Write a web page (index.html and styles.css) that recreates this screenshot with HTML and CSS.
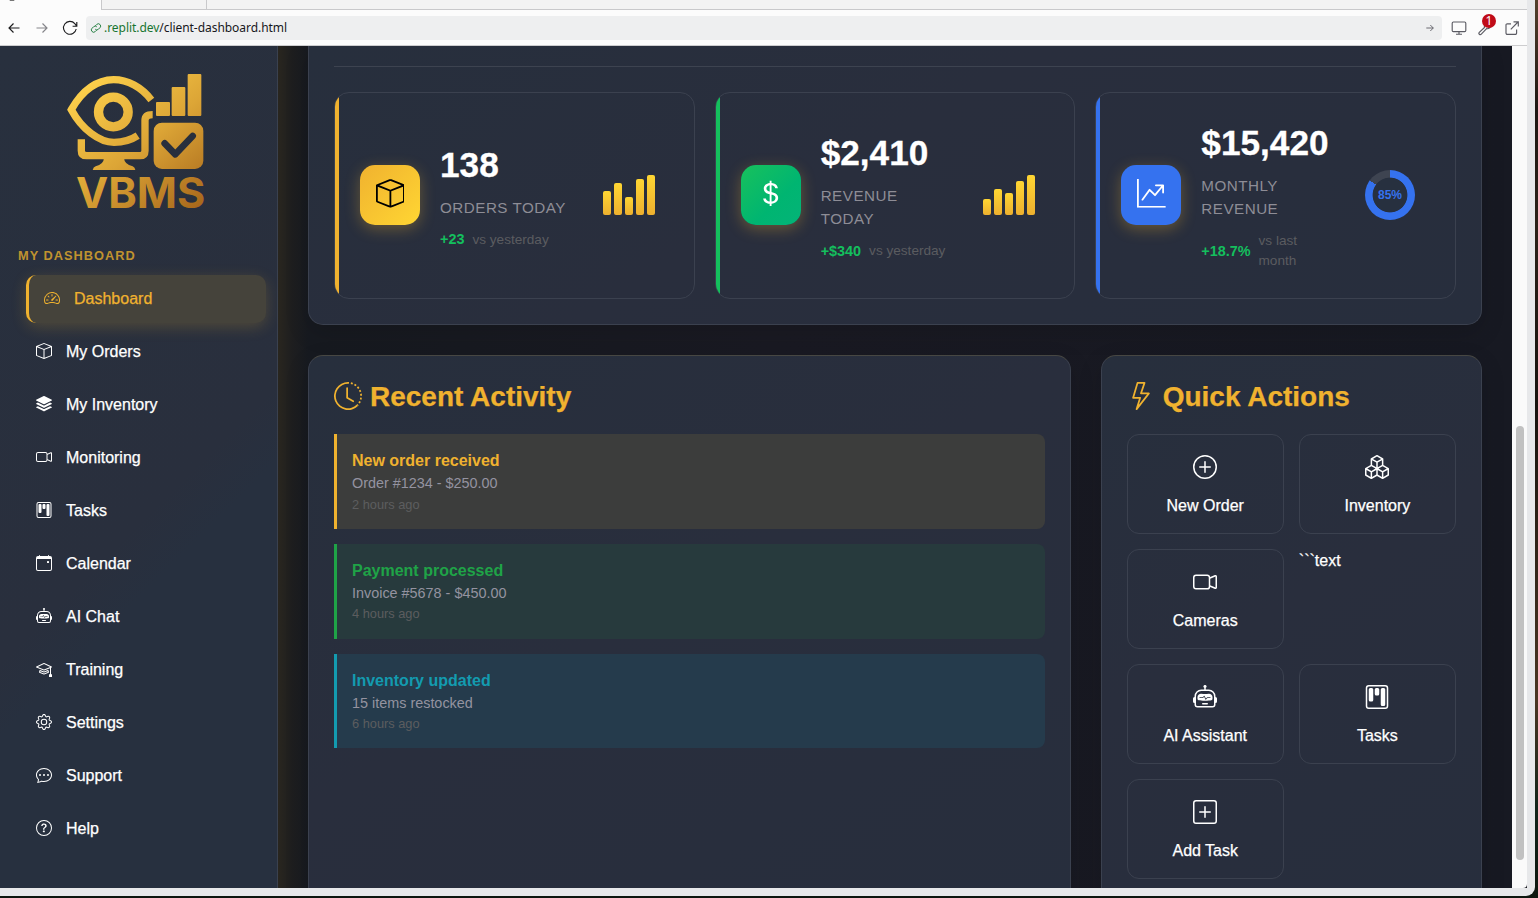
FILE: index.html
```html
<!DOCTYPE html>
<html lang="en">
<head>
<meta charset="utf-8">
<title>Client Dashboard</title>
<link rel="stylesheet" href="styles.css">
</head>
<body>
<svg class="sprite" aria-hidden="true">
  <symbol id="speedometer" viewBox="0 0 16 16"><path d="M8 4a.5.5 0 0 1 .5.5V6a.5.5 0 0 1-1 0V4.5A.5.5 0 0 1 8 4M3.732 5.732a.5.5 0 0 1 .707 0l.915.914a.5.5 0 1 1-.708.708l-.914-.915a.5.5 0 0 1 0-.707M2 10a.5.5 0 0 1 .5-.5h1.586a.5.5 0 0 1 0 1H2.5A.5.5 0 0 1 2 10m9.5 0a.5.5 0 0 1 .5-.5h1.5a.5.5 0 0 1 0 1H12a.5.5 0 0 1-.5-.5m.754-4.246a.39.39 0 0 0-.527-.02L7.547 9.31a.91.91 0 1 0 1.302 1.258l3.434-4.297a.39.39 0 0 0-.029-.518z"/><path fill-rule="evenodd" d="M0 10a8 8 0 1 1 15.547 2.661c-.442 1.253-1.845 1.602-2.932 1.25C11.309 13.488 9.475 13 8 13c-1.474 0-3.31.488-4.615.911-1.087.352-2.49.003-2.932-1.25A8 8 0 0 1 0 10m8-7a7 7 0 0 0-6.603 9.329c.203.575.923.876 1.68.63C4.397 12.533 6.358 12 8 12s3.604.532 4.923.96c.757.245 1.477-.056 1.68-.631A7 7 0 0 0 8 3"/></symbol>
  <symbol id="box" viewBox="0 0 16 16"><path d="M8.186 1.113a.5.5 0 0 0-.372 0L1.846 3.5 8 5.961 14.154 3.5zM15 4.239l-6.5 2.6v7.922l6.5-2.6V4.24zM7.5 14.762V6.838L1 4.239v7.923zM7.443.184a1.5 1.5 0 0 1 1.114 0l7.129 2.852A.5.5 0 0 1 16 3.5v8.662a1 1 0 0 1-.629.928l-7.185 2.874a.5.5 0 0 1-.372 0L.63 13.09a1 1 0 0 1-.63-.928V3.5a.5.5 0 0 1 .314-.464z"/></symbol>
  <symbol id="stack" viewBox="0 0 16 16"><path d="m14.12 10.163 1.715.858c.22.11.22.424 0 .534L8.267 15.34a.6.6 0 0 1-.534 0L.165 11.555a.299.299 0 0 1 0-.534l1.716-.858 5.317 2.659c.505.252 1.1.252 1.604 0l5.317-2.66zM7.733.063a.6.6 0 0 1 .534 0l7.568 3.784a.3.3 0 0 1 0 .535L8.267 8.165a.6.6 0 0 1-.534 0L.165 4.382a.299.299 0 0 1 0-.535z"/><path d="m14.12 6.576 1.715.858c.22.11.22.424 0 .534l-7.568 3.784a.6.6 0 0 1-.534 0L.165 7.968a.299.299 0 0 1 0-.534l1.716-.858 5.317 2.659c.505.252 1.1.252 1.604 0z"/></symbol>
  <symbol id="video" viewBox="0 0 16 16"><path fill-rule="evenodd" d="M0 5a2 2 0 0 1 2-2h7.5a2 2 0 0 1 1.983 1.738l3.11-1.382A1 1 0 0 1 16 4.269v7.462a1 1 0 0 1-1.406.913l-3.111-1.382A2 2 0 0 1 9.5 13H2a2 2 0 0 1-2-2zm11.5 5.175 3.5 1.556V4.269l-3.5 1.556zM2 4a1 1 0 0 0-1 1v6a1 1 0 0 0 1 1h7.5a1 1 0 0 0 1-1V5a1 1 0 0 0-1-1z"/></symbol>
  <symbol id="kanban" viewBox="0 0 16 16"><path d="M13.5 1a1 1 0 0 1 1 1v12a1 1 0 0 1-1 1h-11a1 1 0 0 1-1-1V2a1 1 0 0 1 1-1zm-11-1a2 2 0 0 0-2 2v12a2 2 0 0 0 2 2h11a2 2 0 0 0 2-2V2a2 2 0 0 0-2-2z"/><path d="M6.5 3a1 1 0 0 1 1-1h1a1 1 0 0 1 1 1v3a1 1 0 0 1-1 1h-1a1 1 0 0 1-1-1zm-4 0a1 1 0 0 1 1-1h1a1 1 0 0 1 1 1v7a1 1 0 0 1-1 1h-1a1 1 0 0 1-1-1zm8 0a1 1 0 0 1 1-1h1a1 1 0 0 1 1 1v10a1 1 0 0 1-1 1h-1a1 1 0 0 1-1-1z"/></symbol>
  <symbol id="calendar" viewBox="0 0 16 16"><path d="M11 6.5a.5.5 0 0 1 .5-.5h1a.5.5 0 0 1 .5.5v1a.5.5 0 0 1-.5.5h-1a.5.5 0 0 1-.5-.5z"/><path d="M3.5 0a.5.5 0 0 1 .5.5V1h8V.5a.5.5 0 0 1 1 0V1h1a2 2 0 0 1 2 2v11a2 2 0 0 1-2 2H2a2 2 0 0 1-2-2V3a2 2 0 0 1 2-2h1V.5a.5.5 0 0 1 .5-.5M1 4v10a1 1 0 0 0 1 1h12a1 1 0 0 0 1-1V4z"/></symbol>
  <symbol id="robot" viewBox="0 0 16 16"><path d="M6 12.5a.5.5 0 0 1 .5-.5h3a.5.5 0 0 1 0 1h-3a.5.5 0 0 1-.5-.5M3 8.062C3 6.76 4.235 5.765 5.53 5.886a26.6 26.6 0 0 0 4.94 0C11.765 5.765 13 6.76 13 8.062v1.157a.93.93 0 0 1-.765.935c-.845.147-2.34.346-4.235.346s-3.39-.2-4.235-.346A.93.93 0 0 1 3 9.219zm4.542-.827a.25.25 0 0 0-.217.068l-.92.9a25 25 0 0 1-1.871-.183.25.25 0 0 0-.068.495c.55.076 1.232.149 2.02.193a.25.25 0 0 0 .189-.071l.754-.736.847 1.71a.25.25 0 0 0 .404.062l.932-.97a25 25 0 0 0 1.922-.188.25.25 0 0 0-.068-.495c-.538.074-1.207.145-1.98.189a.25.25 0 0 0-.166.076l-.754.785-.842-1.7a.25.25 0 0 0-.182-.135"/><path d="M8.5 1.866a1 1 0 1 0-1 0V3h-2A4.5 4.5 0 0 0 1 7.5V8a1 1 0 0 0-1 1v2a1 1 0 0 0 1 1v1a2 2 0 0 0 2 2h10a2 2 0 0 0 2-2v-1a1 1 0 0 0 1-1V9a1 1 0 0 0-1-1v-.5A4.5 4.5 0 0 0 10.5 3h-2zM14 7.5V13a1 1 0 0 1-1 1H3a1 1 0 0 1-1-1V7.5A3.5 3.5 0 0 1 5.5 4h5A3.5 3.5 0 0 1 14 7.5"/></symbol>
  <symbol id="mortarboard" viewBox="0 0 16 16"><path d="M8.211 2.047a.5.5 0 0 0-.422 0l-7.5 3.5a.5.5 0 0 0 .025.917l7.5 3a.5.5 0 0 0 .372 0L14 7.14V13a1 1 0 0 0-1 1v2h3v-2a1 1 0 0 0-1-1V6.739l.686-.275a.5.5 0 0 0 .025-.917zM8 8.46 1.758 5.965 8 3.052l6.242 2.913z"/><path d="M4.176 9.032a.5.5 0 0 0-.656.327l-.5 1.7a.5.5 0 0 0 .294.605l4.5 1.8a.5.5 0 0 0 .372 0l4.5-1.8a.5.5 0 0 0 .294-.605l-.5-1.7a.5.5 0 0 0-.656-.327L8 10.466zm-.068 1.873.22-.748 3.496 1.311a.5.5 0 0 0 .352 0l3.496-1.311.22.748L8 12.46z"/></symbol>
  <symbol id="gear" viewBox="0 0 16 16"><path d="M8 4.754a3.246 3.246 0 1 0 0 6.492 3.246 3.246 0 0 0 0-6.492M5.754 8a2.246 2.246 0 1 1 4.492 0 2.246 2.246 0 0 1-4.492 0"/><path d="M9.796 1.343c-.527-1.79-3.065-1.79-3.592 0l-.094.319a.873.873 0 0 1-1.255.52l-.292-.16c-1.64-.892-3.433.902-2.54 2.541l.159.292a.873.873 0 0 1-.52 1.255l-.319.094c-1.79.527-1.79 3.065 0 3.592l.319.094a.873.873 0 0 1 .52 1.255l-.16.292c-.892 1.64.901 3.434 2.541 2.54l.292-.159a.873.873 0 0 1 1.255.52l.094.319c.527 1.79 3.065 1.79 3.592 0l.094-.319a.873.873 0 0 1 1.255-.52l.292.16c1.64.893 3.434-.902 2.54-2.541l-.159-.292a.873.873 0 0 1 .52-1.255l.319-.094c1.79-.527 1.79-3.065 0-3.592l-.319-.094a.873.873 0 0 1-.52-1.255l.16-.292c.893-1.64-.902-3.433-2.541-2.54l-.292.159a.873.873 0 0 1-1.255-.52zm-2.633.283c.246-.835 1.428-.835 1.674 0l.094.319a1.873 1.873 0 0 0 2.693 1.115l.291-.16c.764-.415 1.6.42 1.184 1.185l-.159.292a1.873 1.873 0 0 0 1.116 2.692l.318.094c.835.246.835 1.428 0 1.674l-.319.094a1.873 1.873 0 0 0-1.115 2.693l.16.291c.415.764-.42 1.6-1.185 1.184l-.291-.159a1.873 1.873 0 0 0-2.693 1.116l-.094.318c-.246.835-1.428.835-1.674 0l-.094-.319a1.873 1.873 0 0 0-2.692-1.115l-.292.16c-.764.415-1.6-.42-1.184-1.185l.159-.291A1.873 1.873 0 0 0 1.945 8.93l-.319-.094c-.835-.246-.835-1.428 0-1.674l.319-.094A1.873 1.873 0 0 0 3.06 4.377l-.16-.292c-.415-.764.42-1.6 1.185-1.184l.292.159a1.873 1.873 0 0 0 2.692-1.115z"/></symbol>
  <symbol id="chat" viewBox="0 0 16 16"><path d="M5 8a1 1 0 1 1-2 0 1 1 0 0 1 2 0m4 0a1 1 0 1 1-2 0 1 1 0 0 1 2 0m3 1a1 1 0 1 0 0-2 1 1 0 0 0 0 2"/><path d="m2.165 15.803.02-.004c1.83-.363 2.948-.842 3.468-1.105A9 9 0 0 0 8 15c4.418 0 8-3.134 8-7s-3.582-7-8-7-8 3.134-8 7c0 1.76.743 3.37 1.97 4.6a10.4 10.4 0 0 1-.524 2.318l-.003.011a11 11 0 0 1-.244.637c-.079.186.074.394.273.362a22 22 0 0 0 .693-.125m.8-3.108a1 1 0 0 0-.287-.801C1.618 10.83 1 9.468 1 8c0-3.192 3.004-6 7-6s7 2.808 7 6-3.004 6-7 6a8 8 0 0 1-2.088-.272 1 1 0 0 0-.711.074c-.387.196-1.24.57-2.634.893a11 11 0 0 0 .398-2"/></symbol>
  <symbol id="question" viewBox="0 0 16 16"><path d="M8 15A7 7 0 1 1 8 1a7 7 0 0 1 0 14m0 1A8 8 0 1 0 8 0a8 8 0 0 0 0 16"/><path d="M5.255 5.786a.237.237 0 0 0 .241.247h.825c.138 0 .248-.113.266-.25.09-.656.54-1.134 1.342-1.134.686 0 1.314.343 1.314 1.168 0 .635-.374.927-.965 1.371-.673.489-1.206 1.06-1.168 1.987l.003.217a.25.25 0 0 0 .25.246h.811a.25.25 0 0 0 .25-.25v-.105c0-.718.273-.927 1.01-1.486.609-.463 1.244-.977 1.244-2.056 0-1.511-1.276-2.241-2.673-2.241-1.267 0-2.655.59-2.75 2.286m1.557 5.763c0 .533.425.927 1.01.927.609 0 1.028-.394 1.028-.927 0-.552-.42-.94-1.029-.94-.584 0-1.009.388-1.009.94"/></symbol>
  <symbol id="dollar" viewBox="0 0 16 16"><path d="M4 10.781c.148 1.667 1.513 2.85 3.591 3.003V15h1.043v-1.216c2.27-.179 3.678-1.438 3.678-3.3 0-1.59-.947-2.51-2.956-3.028l-.722-.187V3.467c1.122.11 1.879.714 2.07 1.616h1.47c-.166-1.6-1.54-2.748-3.54-2.875V1H7.591v1.233c-1.939.23-3.27 1.472-3.27 3.156 0 1.454.966 2.483 2.661 2.917l.61.162v4.031c-1.149-.17-1.94-.8-2.131-1.718zm3.391-3.836c-1.043-.263-1.6-.825-1.6-1.616 0-.944.704-1.641 1.8-1.828v3.495l-.2-.05zm1.591 1.872c1.287.323 1.852.859 1.852 1.769 0 1.097-.826 1.828-2.2 1.939V8.73z"/></symbol>
  <symbol id="graph" viewBox="0 0 16 16"><path fill-rule="evenodd" d="M0 0h1v15h15v1H0zm10 3.5a.5.5 0 0 1 .5-.5h4a.5.5 0 0 1 .5.5v4a.5.5 0 0 1-1 0V4.9l-3.613 4.417a.5.5 0 0 1-.74.037L7.06 6.767l-3.656 5.027a.5.5 0 0 1-.808-.588l4-5.5a.5.5 0 0 1 .758-.06l2.609 2.61L13.445 4H10.5a.5.5 0 0 1-.5-.5"/></symbol>
  <symbol id="clock" viewBox="0 0 16 16"><path d="M8.515 1.019A7 7 0 0 0 8 1V0a8 8 0 0 1 .589.022zm2.004.45a7 7 0 0 0-.985-.299l.219-.976q.576.129 1.126.342zm1.37.71a7 7 0 0 0-.439-.27l.493-.87a8 8 0 0 1 .979.654l-.615.789a7 7 0 0 0-.418-.302zm1.834 1.79a7 7 0 0 0-.653-.796l.724-.69q.406.429.747.91zm.744 1.352a7 7 0 0 0-.214-.468l.893-.45a8 8 0 0 1 .45 1.088l-.95.313a7 7 0 0 0-.179-.483m.53 2.507a7 7 0 0 0-.1-1.025l.985-.17q.1.58.116 1.17zm-.131 1.538q.05-.254.081-.51l.993.123a8 8 0 0 1-.23 1.155l-.964-.267q.069-.247.12-.501m-.952 2.379q.276-.436.486-.908l.914.405q-.24.54-.555 1.038zm-.964 1.205q.183-.183.35-.378l.758.653a8 8 0 0 1-.401.432z"/><path d="M8 1a7 7 0 1 0 4.95 11.95l.707.707A8.001 8.001 0 1 1 8 0z"/><path d="M7.5 3a.5.5 0 0 1 .5.5v5.21l3.248 1.856a.5.5 0 0 1-.496.868l-3.5-2A.5.5 0 0 1 7 9V3.5a.5.5 0 0 1 .5-.5"/></symbol>
  <symbol id="lightning" viewBox="0 0 16 16"><path d="M5.52.359A.5.5 0 0 1 6 0h4a.5.5 0 0 1 .474.658L8.694 6H12.5a.5.5 0 0 1 .395.807l-7 9a.5.5 0 0 1-.873-.454L6.823 9.5H3.5a.5.5 0 0 1-.48-.641zM6.374 1 4.168 8.5H7.5a.5.5 0 0 1 .478.647L6.78 13.04 11.478 7H8a.5.5 0 0 1-.474-.658L9.306 1z"/></symbol>
  <symbol id="boxes" viewBox="0 0 16 16"><path d="M7.752.066a.5.5 0 0 1 .496 0l3.75 2.143a.5.5 0 0 1 .252.434v3.995l3.498 2A.5.5 0 0 1 16 9.07v4.286a.5.5 0 0 1-.252.434l-3.75 2.143a.5.5 0 0 1-.496 0l-3.502-2-3.502 2.001a.5.5 0 0 1-.496 0l-3.75-2.143A.5.5 0 0 1 0 13.357V9.071a.5.5 0 0 1 .252-.434L3.75 6.638V2.643a.5.5 0 0 1 .252-.434zM4.25 7.504 1.508 9.071l2.742 1.567 2.742-1.567zM7.5 9.933l-2.75 1.571v3.134l2.75-1.571zm1 3.134 2.75 1.571v-3.134L8.5 9.933zm.508-3.996 2.742 1.567 2.742-1.567-2.742-1.567zm2.242-2.433V3.504L8.5 5.076V8.21zM7.5 8.21V5.076L4.75 3.504v3.134zM5.258 2.643 8 4.21l2.742-1.567L8 1.076zM15 9.933l-2.75 1.571v3.134L15 13.067zM3.75 14.638v-3.134L1 9.933v3.134z"/></symbol>
  <symbol id="plus-circle" viewBox="0 0 16 16"><g fill="none" stroke="currentColor"><circle cx="8" cy="8" r="7.5"/><path stroke-linecap="round" d="M8 4.5v7M4.500 8h7"/></g></symbol>
  <symbol id="plus-square" viewBox="0 0 16 16"><g fill="none" stroke="currentColor"><rect x=".5" y=".5" width="15" height="15" rx="1.500"/><path stroke-linecap="round" d="M8 4.500v7M4.500 8h7"/></g></symbol>
</svg>

<div class="window">
  <header class="chrome">
    <div class="tabs"><span class="tab active"></span><span class="tab second"></span></div>
    <div class="toolbar">
      <svg class="nav-icon" viewBox="0 0 16 16"><path d="M13.500 8H3.300M7.500 3.500 3 8l4.500 4.500"/></svg>
      <svg class="nav-icon faded" viewBox="0 0 16 16"><path d="M2.500 8h10.200M8.500 3.500 13 8l-4.500 4.500"/></svg>
      <svg class="nav-icon" viewBox="0 0 16 16"><path d="M14.200 9A6.400 6.400 0 1 1 12.800 3.700L14.600 6M14.800 2v4.200h-4.200"/></svg>
      <div class="url">
        <svg class="link-icon" viewBox="0 0 12 12"><g transform="rotate(-45 6 6)"><path d="M5 8H3a2.300 2.300 0 0 1 0-4.600h2.200a2.300 2.300 0 0 1 2.200 2.300M7 4h2a2.300 2.300 0 0 1 0 4.600H6.800a2.300 2.300 0 0 1-2.200-2.300"/></g></svg>
        <span class="address"><span class="host">.replit.dev</span>/client-dashboard.html</span>
        <svg class="go-icon" viewBox="0 0 8 8"><path d="M.3 4h7M4.300 1l3 3-3 3"/></svg>
      </div>
      <svg class="tool-icon monitor" viewBox="0 0 16 16"><rect x="1.200" y="2" width="13.600" height="9.600" rx="1.200"/><path d="M8 11.600V14M5 14.200h6"/></svg>
      <span class="tool-wrap">
        <svg class="tool-icon" viewBox="0 0 16 16"><path d="M8 7 2.300 12.300a1.300 1.300 0 0 0 2 1.900L9.600 8.600M7.600 7.200a3.400 3.400 0 0 1 4.200-4.400M9.500 8.600a3.400 3.400 0 0 0 4.200-4"/></svg>
        <span class="count">1</span>
      </span>
      <svg class="tool-icon" viewBox="0 0 16 16"><path d="M7 3.800H3.300a1.300 1.300 0 0 0-1.300 1.300v8A1.300 1.300 0 0 0 3.300 14.400h8a1.300 1.300 0 0 0 1.300-1.300V9.500M9.500 1.800h4.800v4.800M14 2 6.800 9.300"/></svg>
    </div>
  </header>

  <div class="viewport">
    <aside class="sidebar">
      <svg class="logo" viewBox="0 0 510 480">
        <defs>
          <linearGradient id="gold" gradientUnits="userSpaceOnUse" x1="120" y1="60" x2="430" y2="450"><stop offset="0" stop-color="#fdd04b"/><stop offset=".5" stop-color="#dca536"/><stop offset="1" stop-color="#a9691c"/></linearGradient>
        </defs>
        <g fill="none" stroke="url(#gold)">
          <circle cx="190" cy="156" r="44.500" stroke-width="28"/>
          <path stroke-width="22" d="M304 120C275 82 233 59 191 59 130 60 89 105 64 149 96 208 148 247 192 247 220 247 245 239 263 227"/>
          <path stroke-width="22" d="M94 238V272Q94 287 110 287H270Q285 287 285 272V181Q285 164 308 164"/>
        </g>
        <g fill="url(#gold)">
          <path d="M162 294H222Q223 313 248 319Q255 322 256 330H128Q130 321 137 319Q161 313 162 294Z"/>
          <rect x="318" y="126" width="42" height="42" rx="3"/>
          <rect x="365" y="81" width="41" height="87" rx="3"/>
          <rect x="413" y="42" width="41" height="126" rx="3"/>
          <rect x="311" y="188" width="149" height="139" rx="25"/>
          <text class="logo-name" x="78" y="443" textLength="388" lengthAdjust="spacingAndGlyphs">VBMS</text>
        </g>
        <path fill="none" stroke="#282f3d" stroke-width="20" stroke-linecap="round" stroke-linejoin="round" d="M344 250 376 283 428 228"/>
      </svg>
      <div class="section-label">MY DASHBOARD</div>
      <nav class="menu">
        <a class="menu-item active"><svg class="icon"><use href="#speedometer"/></svg>Dashboard</a>
        <a class="menu-item"><svg class="icon"><use href="#box"/></svg>My Orders</a>
        <a class="menu-item"><svg class="icon"><use href="#stack"/></svg>My Inventory</a>
        <a class="menu-item"><svg class="icon"><use href="#video"/></svg>Monitoring</a>
        <a class="menu-item"><svg class="icon"><use href="#kanban"/></svg>Tasks</a>
        <a class="menu-item"><svg class="icon"><use href="#calendar"/></svg>Calendar</a>
        <a class="menu-item"><svg class="icon"><use href="#robot"/></svg>AI Chat</a>
        <a class="menu-item"><svg class="icon"><use href="#mortarboard"/></svg>Training</a>
        <a class="menu-item"><svg class="icon"><use href="#gear"/></svg>Settings</a>
        <a class="menu-item"><svg class="icon"><use href="#chat"/></svg>Support</a>
        <a class="menu-item"><svg class="icon"><use href="#question"/></svg>Help</a>
      </nav>
    </aside>

    <main class="main">
      <section class="panel overview">
        <div class="stats">
          <article class="stat orders">
            <div class="stat-icon"><svg class="icon"><use href="#box"/></svg></div>
            <div class="stat-body">
              <div class="value">138</div>
              <div class="label">ORDERS TODAY</div>
              <div class="change"><b>+23</b><span>vs yesterday</span></div>
            </div>
            <div class="chart"><i style="height:24px"></i><i style="height:32px"></i><i style="height:18px"></i><i style="height:36px"></i><i style="height:40px"></i></div>
          </article>
          <article class="stat revenue">
            <div class="stat-icon"><svg class="icon"><use href="#dollar"/></svg></div>
            <div class="stat-body">
              <div class="value">$2,410</div>
              <div class="label">REVENUE TODAY</div>
              <div class="change"><b>+$340</b><span>vs yesterday</span></div>
            </div>
            <div class="chart"><i style="height:16px"></i><i style="height:26px"></i><i style="height:22px"></i><i style="height:34px"></i><i style="height:40px"></i></div>
          </article>
          <article class="stat monthly">
            <div class="stat-icon"><svg class="icon"><use href="#graph"/></svg></div>
            <div class="stat-body">
              <div class="value">$15,420</div>
              <div class="label">MONTHLY REVENUE</div>
              <div class="change"><b>+18.7%</b><span>vs last month</span></div>
            </div>
            <div class="chart"><div class="ring"><span>85%</span></div></div>
          </article>
        </div>
      </section>

      <div class="columns">
        <section class="panel card">
          <h3><svg class="icon"><use href="#clock"/></svg>Recent Activity</h3>
          <div class="activity gold"><strong>New order received</strong><p>Order #1234 - $250.00</p><small>2 hours ago</small></div>
          <div class="activity green"><strong>Payment processed</strong><p>Invoice #5678 - $450.00</p><small>4 hours ago</small></div>
          <div class="activity teal"><strong>Inventory updated</strong><p>15 items restocked</p><small>6 hours ago</small></div>
        </section>
        <section class="panel card">
          <h3><svg class="icon"><use href="#lightning"/></svg>Quick Actions</h3>
          <div class="actions">
            <a class="action"><svg class="icon"><use href="#plus-circle"/></svg>New Order</a>
            <a class="action"><svg class="icon"><use href="#boxes"/></svg>Inventory</a>
            <a class="action"><svg class="icon"><use href="#video"/></svg>Cameras</a>
            <div class="stray">```text</div>
            <a class="action"><svg class="icon"><use href="#robot"/></svg>AI Assistant</a>
            <a class="action"><svg class="icon"><use href="#kanban"/></svg>Tasks</a>
            <a class="action"><svg class="icon"><use href="#plus-square"/></svg>Add Task</a>
          </div>
        </section>
      </div>
    </main>
    <div class="scrollbar"><div class="thumb"></div></div>
  </div>
</div>
</body>
</html>
```
FILE: styles.css
```css
* { box-sizing: border-box; }

body {
  margin: 0;
  height: 898px;
  overflow: hidden;
  background: linear-gradient(180deg, #54402c 0, #1d1612 12%, #2b2118 25%, #17120e 45%, #4a3622 78%, #12241a 90%, #0d160e 100%);
  font-family: "Liberation Sans", Arial, sans-serif;
  font-size: 16px;
  line-height: 1.5;
  color: #fff;
}

.sprite { position: absolute; width: 0; height: 0; }

.icon {
  width: 16px;
  height: 16px;
  flex: none;
  fill: currentColor;
}

.window {
  display: flex;
  flex-direction: column;
  width: 1535px;
  height: 896px;
  padding: 0 8px 8px 0;
  background: #e7e8ea;
  border-radius: 0 0 9px 0;
}

/* Browser chrome */
.chrome { height: 46px; background: #fcfcfc; border-bottom: 1px solid #cdcdcf; }
.tabs { display: flex; height: 10px; background: #f3f3f3; }
.tab { border-right: 1px solid #c9c9cb; }
.tab.active { width: 102px; background: radial-gradient(ellipse 3px 1px at 12px 0, #777 90%, transparent) #fcfcfc; }
.tab.second { width: 105px; }
.tabs::after { content: ""; flex: 1; }
.tab.second, .tabs::after { border-bottom: 1px solid #c9c9cb; }

.toolbar { display: flex; align-items: center; height: 35px; padding-left: 6px; }
.nav-icon, .tool-icon, .link-icon, .go-icon { fill: none; stroke: #1c1c1e; stroke-width: 1.15; flex: none; }
.nav-icon { width: 16px; height: 16px; margin-right: 12px; }
.nav-icon.faded { stroke: #85858a; }
.nav-icon:nth-child(3) { margin-right: 8px; }
.tool-icon { width: 16px; height: 16px; stroke: #5b5b63; display: block; }

.url {
  display: flex;
  align-items: center;
  width: 1356px;
  height: 24px;
  margin-right: 8.500px;
  padding: 0 8px 0 4px;
  border-radius: 4px;
  background: #eeeff0;
}
.link-icon { width: 12px; height: 12px; stroke: #1f7d3e; stroke-width: .9; margin-right: 2px; }
.address { flex: 1; font: 12px/18px "Noto Sans", sans-serif; letter-spacing: -.05px; color: #17171c; }
.host { color: #17752f; }
.go-icon { width: 8px; height: 8px; stroke: #5b5b63; stroke-width: .9; }
.tool-wrap { position: relative; margin: 0 10.500px; }
.count {
  position: absolute;
  left: 5px;
  top: -6px;
  width: 14px;
  height: 14px;
  border-radius: 50%;
  background: #c00b18;
  font: 12px/14px "Noto Sans", sans-serif;
  text-align: center;
}

.viewport {
  display: flex;
  height: 842px;
  overflow: hidden;
  background: #171920;
}

/* Sidebar */
.sidebar {
  width: 278px;
  flex: none;
  padding-top: 14px;
  background: linear-gradient(135deg, #28303e 0%, #292f3d 55%, #27303f 62%, #27303f 100%);
  border-right: 1px solid #3a414f;
}
.logo { display: block; width: 170px; height: 160px; margin-left: 50px; }
.logo-name { font: 700 126px Inter, sans-serif; }
.section-label {
  margin: 26px 0 10px 18px;
  font-size: 12.800px;
  line-height: 19px;
  font-weight: 700;
  letter-spacing: 1px;
  color: #c0932f;
}
.menu { display: flex; flex-direction: column; gap: 5px; width: 240px; margin-left: 18px; }
.menu-item {
  display: flex;
  align-items: center;
  gap: 14px;
  height: 48px;
  padding: 0 18px;
  -webkit-text-stroke: .25px currentColor;
}
.menu-item .icon { margin-top: -2px; }
.menu-item.active {
  margin: 0 -8px 0 8px;
  padding-left: 15px;
  border-left: 3px solid #f0b22f;
  border-radius: 10px;
  background: #45433b;
  color: #f0b22f;
  box-shadow: 0 4px 15px rgba(240, 178, 47, .2);
}

/* Main area */
.main {
  width: 1234px;
  flex: none;
  padding: 0 30px;
  background: linear-gradient(90deg, #29261f 0, #1e1e1f 14px, #171a20 30px, #1a1a23 40%, #171922 100%);
}
.panel {
  background: linear-gradient(150deg, #272f3d, #292e3d 45%, #272e3d);
  border: 1px solid #3b414f;
  border-radius: 15px;
  box-shadow: 0 8px 24px rgba(0, 0, 0, .14);
}
.overview { height: 279px; padding: 20px 25px 0; border-top: 0; border-radius: 0 0 15px 15px; }
.stats {
  display: grid;
  grid-template-columns: repeat(3, 1fr);
  gap: 20px;
  padding-top: 25px;
  border-top: 1px solid #3d4350;
}
.stat {
  display: flex;
  align-items: center;
  gap: 20px;
  height: 207px;
  padding: 0 25px 2px;
  position: relative;
  overflow: hidden;
  border: 1px solid #3b414f;
  border-radius: 15px;
}
.stat::before { content: ""; position: absolute; inset: 0 auto 0 0; width: 4px; background: var(--accent); }
.orders { --accent: #f0b22f; --tile: linear-gradient(135deg, #f0b22f, #ffd633); }
.revenue { --accent: #14bf5d; --tile: linear-gradient(135deg, #18c15c, #00b571 60%, #04b378); }
.monthly { --accent: #3572ef; --tile: #3572ef; }
.stat-icon {
  display: grid;
  place-items: center;
  width: 60px;
  height: 60px;
  flex: none;
  border-radius: 15px;
  background: var(--tile);
  box-shadow: 0 4px 15px rgba(240, 178, 47, .32);
}
.stat-icon .icon { width: 28.800px; height: 28.800px; margin-top: -2px; }
.orders .stat-icon { color: #000; }
.stat-body { flex: 1; min-width: 0; }
.value { font-size: 35.200px; font-weight: 700; margin-bottom: 5px; -webkit-text-stroke: .3px currentColor; }
.label { font-size: 15.200px; letter-spacing: .5px; color: #8e8d96; margin-bottom: 10px; }
.change { display: flex; align-items: center; gap: 8px; font-size: 13.600px; color: #5b5c60; }
.change b { font-size: 14.400px; line-height: 21px; color: #14bf5d; }
.chart { display: flex; align-items: flex-end; justify-content: center; gap: 3px; width: 80px; flex: none; }
.chart i { width: 8px; border-radius: 2px; background: linear-gradient(#ffd633, #edb02f); }
.ring {
  display: grid;
  place-items: center;
  width: 50px;
  height: 50px;
  border-radius: 50%;
  background: radial-gradient(circle, #27303f 17px, transparent 17.800px), conic-gradient(#3572ef 85%, #3e4451 0);
  font-size: 12px;
  font-weight: 700;
  color: #3572ef;
}

.columns { display: grid; grid-template-columns: 2fr 1fr; gap: 30px; margin-top: 30px; }
.card { height: 570px; padding: 24px 25px; border-top-color: #474743; }
h3 {
  display: flex;
  align-items: center;
  gap: 8px;
  margin: 0 0 20.400px;
  font-size: 28px;
  line-height: 33.600px;
  color: #f0b22f;
  -webkit-text-stroke: .25px currentColor;
}
h3 .icon { width: 28px; height: 28px; margin-top: -2px; -webkit-text-stroke: 0; }

.activity {
  margin-bottom: 15px;
  padding: 15px;
  border-left: 3px solid var(--tone);
  border-radius: 0 8px 8px 0;
}
.activity strong { display: block; color: var(--tone); }
.activity p { margin: 0; font-size: 14.400px; color: #9493a0; }
.activity small { display: block; font-size: 12.800px; color: #5c5d5f; }
.gold { --tone: #f0b22f; background: #3c3d3c; }
.green { --tone: #1fa347; background: #273a3d; }
.teal { --tone: #139bb0; background: #253b4c; }

.actions { display: grid; grid-template-columns: 1fr 1fr; gap: 15px; grid-auto-rows: 100px; }
.action {
  display: flex;
  flex-direction: column;
  align-items: center;
  gap: 15px;
  padding-top: 20px;
  border: 1px solid #3b414f;
  border-radius: 12px;
  -webkit-text-stroke: .25px currentColor;
}
.action .icon { width: 24px; height: 24px; -webkit-text-stroke: 0; }
.stray { -webkit-text-stroke: .25px currentColor; }

.scrollbar { width: 15px; flex: none; padding: 380px 3px 0 4px; background: #fafafa; border-radius: 0 0 4px 0; }
.thumb { height: 434px; border-radius: 4px; background: #c1c1c1; }
```
